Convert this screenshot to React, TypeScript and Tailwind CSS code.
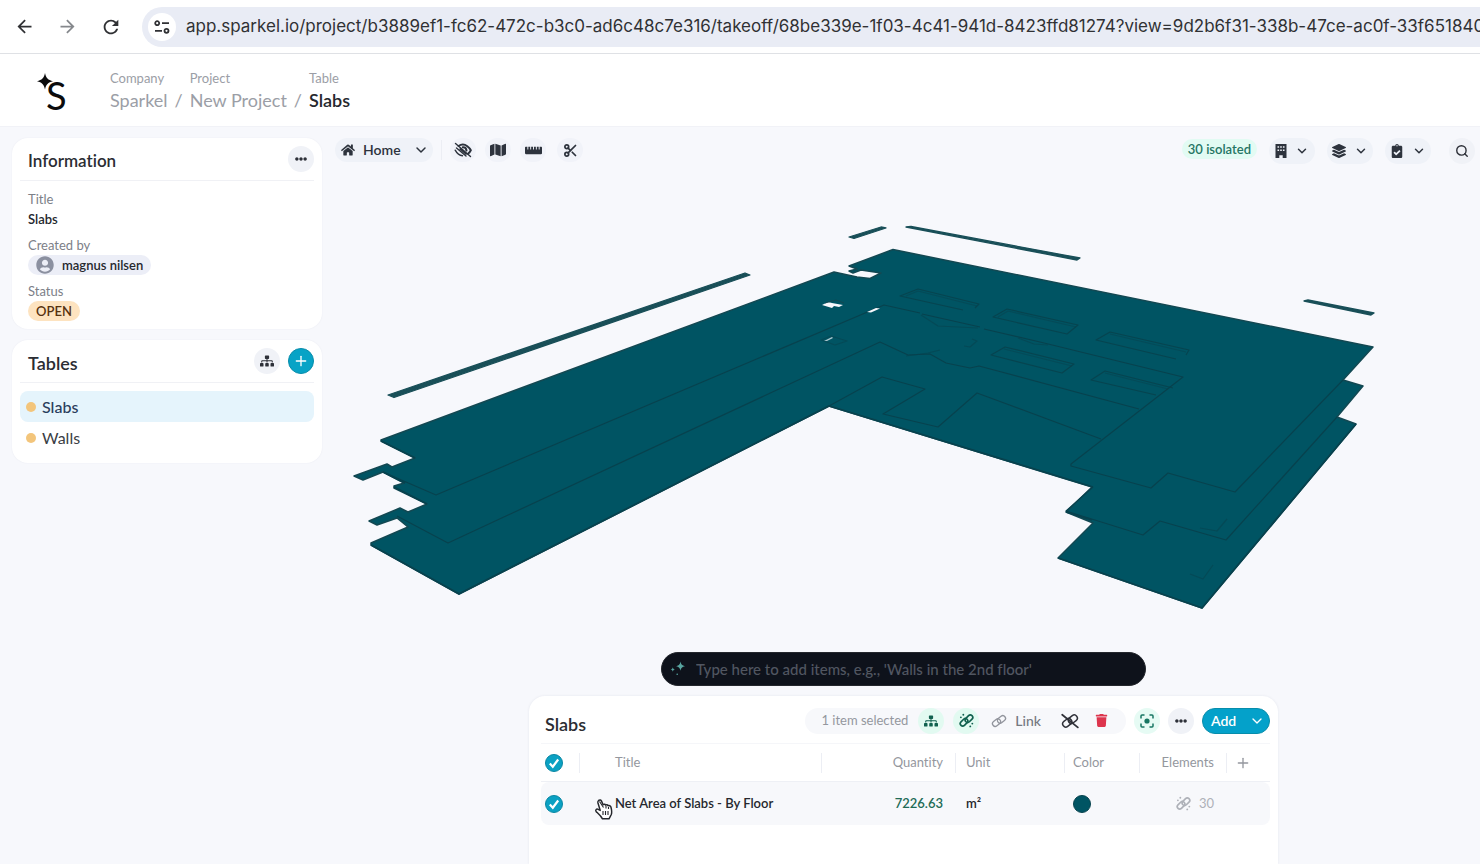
import React from "react";
import {
  FaHome,
  FaMap,
  FaRulerHorizontal,
  FaLayerGroup,
  FaClipboardCheck,
  FaSitemap,
  FaEllipsisH,
  FaUserCircle,
  FaTrash,
} from "react-icons/fa";
import { MdArrowBack, MdArrowForward, MdRefresh } from "react-icons/md";
import { ChevronDown, Plus, Scissors, Search } from "lucide-react";

function Divider() {
  return <span className="h-5 w-px bg-[#eceef4]" />;
}

function Sparkle({ className }: { className: string }) {
  return (
    <svg viewBox="0 0 16 16" className={className} fill="currentColor" aria-hidden="true">
      <path d="M10.500 0.500c.6 3 1.500 4 4.500 4.700-3 .7-3.900 1.600-4.500 4.600-.6-3-1.500-3.900-4.500-4.600 3-.7 3.900-1.700 4.500-4.700z" />
      <path d="M2.800 6.200c.3 1.500.8 2 2.200 2.300-1.400.3-1.900.8-2.200 2.300-.3-1.500-.8-2-2.200-2.300 1.400-.3 1.900-.8 2.200-2.300z" />
      <circle cx="7.200" cy="13.200" r="0.800" />
    </svg>
  );
}

function ChainLink({ className, slashed = false }: { className: string; slashed?: boolean }) {
  return (
    <svg viewBox="0 0 18 16" className={className} fill="none" stroke="currentColor" strokeWidth="1.500" strokeLinecap="round" aria-hidden="true">
      <g transform="rotate(-38 9 8)">
        <rect x="0.800" y="4.600" width="9.800" height="6.200" rx="3.100" />
        <rect x="7.400" y="5.200" width="9.800" height="6.200" rx="3.100" />
      </g>
      {slashed && <path d="M1.200 1.800l15.600 12.600" strokeWidth="1.800" />}
    </svg>
  );
}

function BrokenLink({ className }: { className: string }) {
  return (
    <svg viewBox="0 0 16 16" className={className} fill="none" stroke="currentColor" strokeWidth="1.800" strokeLinecap="round" aria-hidden="true">
      <g transform="rotate(-45 8 8)">
        <rect x="0.200" y="4.900" width="9.200" height="5.200" rx="2.600" />
        <rect x="6.600" y="5.900" width="9.200" height="5.200" rx="2.600" />
      </g>
      <g fill="currentColor" stroke="none">
        <circle cx="4.600" cy="1.800" r="1" />
        <circle cx="2" cy="4.600" r="1" />
        <circle cx="14.200" cy="11.300" r="1" />
        <circle cx="12" cy="14.300" r="1" />
      </g>
    </svg>
  );
}

function HiddenEye() {
  return (
    <svg viewBox="0 0 18 16" className="h-4 w-[18px]" fill="none" stroke="currentColor" strokeLinecap="round" aria-hidden="true">
      <path d="M4.500 4Q9 1 13.300 4.200 15.700 6 16.800 8.200 15.800 10.300 14 11.700" strokeWidth="2" />
      <path d="M8.800 5.200Q12.200 5 12.500 8.600" strokeWidth="2" />
      <path d="M1.500 1.500l15 13M2.500 6l9.500 8M1.200 8.200Q4 13.400 8.500 13.800M6 7l6 5" strokeWidth="1.400" />
    </svg>
  );
}

function Building() {
  return (
    <svg viewBox="0 0 12 14" className="h-3.5 w-3" aria-hidden="true">
      <path
        fill="currentColor"
        fillRule="evenodd"
        d="M0.500 0h11v14h-3.800v-2.800h-3.400V14H0.500zM2.500 2.200v1.500h1.600V2.200zM5.200 2.200v1.500h1.600V2.200zM7.900 2.200v1.500h1.600V2.200zM2.500 5.500V7h1.600V5.500zM5.200 5.500V7h1.600V5.500zM7.900 5.500V7h1.600V5.500z"
      />
    </svg>
  );
}

function FocusIcon() {
  return (
    <svg viewBox="0 0 14 14" className="size-3.5" fill="none" stroke="currentColor" strokeWidth="1.500" aria-hidden="true">
      <path d="M1 4.500V2q0-1 1-1h2.500M9.500 1H12q1 0 1 1v2.500M13 9.500V12q0 1-1 1H9.500M4.500 13H2q-1 0-1-1V9.500" />
      <circle cx="7" cy="7" r="2.600" fill="currentColor" stroke="none" />
    </svg>
  );
}

function HandCursor() {
  return (
    <svg viewBox="0 0 20 22" className="pointer-events-none absolute top-4 left-3.5 z-10 h-[22px] w-5" aria-hidden="true">
      <path
        d="M4.800 2.500c1-.9 2.200-.5 2.700.6l1.600 3.700c.8-.8 2-.6 2.500.3.900-.6 2-.3 2.400.6 1.100-.5 2.500.1 2.900 1.300.7 2.600 1.300 5.300.4 7.500l-2.300 4.300H8.500c-1.500-2.900-4-5-6.300-7.200-1.200-1.300.2-3.200 2-2.300l2 1.100-2.300-7.700c-.2-.9.200-1.800.9-2.400z"
        fill="#fff"
        stroke="#25272c"
        strokeWidth="1.500"
        strokeLinejoin="round"
      />
      <path d="M5.500 3.500l4 6M12 8v2.500M14.500 9v2M9 13v4M11.500 13v4M14 13v4" stroke="#25272c" strokeWidth="1.100" />
    </svg>
  );
}

function Check({ label }: { label: string }) {
  return (
    <label className="relative block size-[18px]">
      <input
        type="checkbox"
        defaultChecked
        aria-label={label}
        className="block size-[18px] appearance-none rounded-full border border-[#0a87a3] bg-[#0ba1c3]"
      />
      <svg viewBox="0 0 18 18" className="pointer-events-none absolute inset-0" fill="none" aria-hidden="true">
        <path d="M4.800 9.500l3 3.200L13.200 5.500" stroke="#fff" strokeWidth="2.200" />
      </svg>
    </label>
  );
}

function RoundButton({ label, children }: { label: string; children: React.ReactNode }) {
  return (
    <button aria-label={label} className="flex size-[26px] items-center justify-center rounded-full bg-[#f0f2f7] text-[#2d3038]">
      {children}
    </button>
  );
}

function ToolButton({ label, children }: { label: string; children: React.ReactNode }) {
  return (
    <button aria-label={label} className="flex h-6 w-[26px] items-center justify-center rounded-full bg-[#f1f3f9] text-[#2d333d]">
      {children}
    </button>
  );
}

function MenuButton({ label, children }: { label: string; children: React.ReactNode }) {
  return (
    <button aria-label={label} className="flex h-[26px] w-[46px] items-center justify-center gap-2 rounded-full bg-[#eff2f8] text-[#2d333d]">
      {children}
      <ChevronDown className="size-3.5" strokeWidth={2.500} />
    </button>
  );
}

function BrowserBar() {
  return (
    <div className="flex h-[54px] items-center gap-4 overflow-hidden border-b border-[#dfe1e5] bg-white pl-3.5 text-[#303134]">
      <div className="flex items-center gap-[22px]">
        <button aria-label="Back"><MdArrowBack className="size-[21px]" /></button>
        <button aria-label="Forward" className="text-[#85888c]"><MdArrowForward className="size-[21px]" /></button>
        <button aria-label="Reload"><MdRefresh className="size-[22px]" /></button>
      </div>
      <div className="ml-1 flex h-10 min-w-0 flex-1 items-center gap-2.5 rounded-l-full bg-[#e9ecf5] pl-1.5">
        <button aria-label="Site information" className="flex size-7 shrink-0 items-center justify-center rounded-full bg-white">
          <svg viewBox="0 0 16 14" className="h-3.5 w-4" fill="none" stroke="currentColor" strokeWidth="1.800" aria-hidden="true">
            <circle cx="3.200" cy="3.200" r="2" />
            <path d="M8 3.200h7M1 10.800h7" />
            <circle cx="12.500" cy="10.800" r="2" />
          </svg>
        </button>
        <input
          aria-label="Address"
          readOnly
          value="app.sparkel.io/project/b3889ef1-fc62-472c-b3c0-ad6c48c7e316/takeoff/68be339e-1f03-4c41-941d-8423ffd81274?view=9d2b6f31-338b-47ce-ac0f-33f651840"
          className="min-w-0 flex-1 bg-transparent font-[Inter,sans-serif] text-[17px] outline-none"
        />
      </div>
    </div>
  );
}

function AppHeader() {
  return (
    <header className="flex h-[73px] items-center gap-9 border-b border-[#f1f2f7] bg-white pl-9">
      <svg viewBox="0 0 38 60" className="h-[60px] w-[38px]" role="img" aria-label="Sparkel">
        <text x="10" y="50" fontSize="38" fontFamily="Lato, sans-serif" fill="#0b0b0c">S</text>
        <path d="M9 13c1 5 3 7 8 8.200-5 1.200-7 3.300-8 8.300-1-5-3-7.100-8-8.300 5-1.200 7-3.200 8-8.200z" fill="#0b0b0c" />
      </svg>
      <nav aria-label="Breadcrumb" className="flex items-end gap-[7px] text-lg leading-6 text-[#9b9ea6]">
        <a href="#company"><span className="block text-[13px] leading-5">Company</span>Sparkel</a>
        <span>/</span>
        <a href="#project"><span className="block text-[13px] leading-5">Project</span>New Project</a>
        <span>/</span>
        <a href="#table" className="font-semibold text-[#26282e]">
          <span className="block text-[13px] leading-5 font-normal text-[#9b9ea6]">Table</span>Slabs
        </a>
      </nav>
    </header>
  );
}

function Sidebar() {
  return (
    <aside className="flex w-[310px] shrink-0 flex-col gap-[11px] pt-[11px]">
      <section className="h-[191px] rounded-2xl bg-white px-2 pt-2 shadow-[0_0_2px_rgba(30,40,80,0.060)]">
        <div className="flex h-[35px] items-start justify-between border-b border-[#f0f1f5] pl-2">
          <h2 className="text-[17px] leading-[30px] font-semibold text-[#2b2d33]">Information</h2>
          <RoundButton label="More options"><FaEllipsisH className="size-3" /></RoundButton>
        </div>
        <dl className="px-2 pt-2 text-[13px] leading-5">
          <dt className="text-[#7c8088]">Title</dt>
          <dd className="mb-1.5 font-semibold text-[#26282e]">Slabs</dd>
          <dt className="text-[#7c8088]">Created by</dt>
          <dd className="mb-1.5 flex h-5 w-fit items-center gap-2 rounded-full bg-[#eceef7] px-2 font-semibold text-[#26282e]">
            <FaUserCircle className="size-[18px] text-[#8b90a0]" />magnus nilsen
          </dd>
          <dt className="text-[#7c8088]">Status</dt>
          <dd className="w-fit rounded-full bg-[#fde3c0] px-2 font-semibold text-[#55310f]">OPEN</dd>
        </dl>
      </section>
      <section className="rounded-2xl bg-white px-2 pt-2 pb-2.5 shadow-[0_0_2px_rgba(30,40,80,0.060)]">
        <div className="flex h-[35px] items-start gap-2 border-b border-[#f0f1f5] pl-2">
          <h2 className="flex-1 text-lg leading-[30px] font-semibold text-[#2b2d33]">Tables</h2>
          <RoundButton label="Table hierarchy"><FaSitemap className="size-3.5" /></RoundButton>
          <button aria-label="Add table" className="flex size-[26px] items-center justify-center rounded-full border border-[#078dab] bg-[#07a3c6] text-white">
            <Plus className="size-4" strokeWidth={2} />
          </button>
        </div>
        <ul className="pt-2 text-base text-[#3a3d44]">
          <li>
            <a href="#slabs" className="flex h-[31px] items-center gap-1.5 rounded-lg bg-[#e5f4fc] px-1.5 font-medium text-[#2a3d5c]">
              <span className="size-2.5 rounded-full bg-[#f3c57b]" />Slabs
            </a>
          </li>
          <li>
            <a href="#walls" className="flex h-[31px] items-center gap-1.5 rounded-lg px-1.5">
              <span className="size-2.5 rounded-full bg-[#f3c57b]" />Walls
            </a>
          </li>
        </ul>
      </section>
    </aside>
  );
}

function Toolbar() {
  return (
    <div className="flex h-[26px] items-start pr-[5px] pl-2">
      <button className="flex h-6 w-[98px] items-center rounded-full bg-[#eff2f8] pl-1.5 text-sm leading-5 font-semibold text-[#2d333d]">
        <FaHome className="mr-2 size-3.5" />Home
        <ChevronDown className="mr-1 ml-auto size-4" strokeWidth={2.200} />
      </button>
      <span className="mx-2 flex h-6 items-center"><Divider /></span>
      <div className="flex items-center gap-[9px]">
        <ToolButton label="Hide elements"><HiddenEye /></ToolButton>
        <ToolButton label="Map"><FaMap className="size-4" /></ToolButton>
        <ToolButton label="Measure"><FaRulerHorizontal className="size-[17px]" /></ToolButton>
        <span className="ml-0.5"><ToolButton label="Cut"><Scissors className="size-[15px]" strokeWidth={2.800} /></ToolButton></span>
      </div>
      <div className="ml-auto flex items-center gap-3">
        <span className="-mt-1 rounded-full bg-[#e2fbf3] px-1.5 text-[13px] leading-5 font-semibold text-[#257564]">30 isolated</span>
        <MenuButton label="Floors"><Building /></MenuButton>
        <MenuButton label="Layers"><FaLayerGroup className="size-3.5" /></MenuButton>
        <MenuButton label="Tasks"><FaClipboardCheck className="size-3.5" /></MenuButton>
        <span className="-ml-0.5 -mr-1"><Divider /></span>
        <RoundButton label="Search"><Search className="size-3.5" strokeWidth={2.400} /></RoundButton>
      </div>
    </div>
  );
}

function SlabModel() {
  return (
    <svg viewBox="327 164 1153 488" className="block h-auto w-full" role="img" aria-label="Building slabs model">
      <g fill="#194f58" stroke="#194f58" strokeWidth="1.300" strokeLinejoin="round">
        <path d="M388 395l6 2.500L750 275l-5-2z" />
        <path d="M849 237l5 1.500 32-10.500-5-1z" />
        <path d="M906 227l5-0.500L1080 258l-3 2z" />
        <path d="M1304 301l4-1 66 13-3 2z" />
      </g>
      <path
        fill="#005463"
        stroke="#134852"
        strokeWidth="1.500"
        strokeLinejoin="round"
        d="M381 440L834 272 857 277 870 278.500 881 273 861 270 853 273 849 271 857 269 849 266 893 249.500 1373 347 1343 380 1363 386 1337 417 1356 424 1202 608 1058 558 1093 523 1066 512 1092 487 829 406 459 594 371 545 371 543 408 527 397 518 377 525 369 521 400 508 408 512 427 504 394 488 394 486 404 483 383 472 363 480 354 476 387 464 392 467 415 458 381 441z"
      />
      <g fill="none" stroke="#07424e" strokeWidth="1.200" strokeLinejoin="round">
        <path d="M383 472L436 495 884 305 920 313M922 314l58 13M984 329L1040 342 1183 377 1071 464v2l80 22 17-15 67 19 108-112" />
        <path d="M397 516L448 543 880 342l28 13 22-1 16 9 24 5 9-2 160 43M1093 487l-27 24 77 24 17-14 66 19L1337 417" />
        <path d="M829 406L882 377l43 12-42 25 55 13 39-34 124 46" />
        <g strokeOpacity="0.900">
          <path d="M963 310L900 296l18-7 61 15-4 4M993 317l14-8 71 16-11 9zM1176 359l-80-19 14-8 79 18-3 5M991 355l14-8 69 17-12 9zM1156 395l-65-15 14-9 68 17" />
          <path d="M906 296l12-5 59 15M998 317l10-6 68 16M1110 334l76 18M1004 349l68 17M1105 373l63 16" strokeOpacity="0.500" />
          <path d="M921 315l17 11 40 2M906 356l22-3 12-3M1018 338l16 6 14 1M972 339l5 2-7 6-6-1M821 340l10-4 16 5-12 4zM1200 528l17 3 10-12M1190 574l13 5 10-14" strokeOpacity="0.600" />
        </g>
        <path d="M371 545l88 49L829 406l264 81M1066 512l26 8M1058 558l144 50 154-184M394 487l33 17M381 441l34 17M383 472l22 11" strokeWidth="1.800" />
      </g>
      <g fill="#f7f8fc">
        <path d="M822 305l6-3 4 1 11 2-4 2-5-1-2 2z" />
        <path d="M825 303l11-3 8 3" fill="none" stroke="#134852" />
        <path d="M867 312l9-4 4 .5-9 4z" />
        <path d="M824 341l8-4 1 1-6 3z" fillOpacity="0.700" />
      </g>
    </svg>
  );
}

function Prompt() {
  return (
    <label className="flex h-[34px] w-[485px] max-w-full items-center gap-2.5 rounded-full border border-[#24272d] bg-[#0e121b] pl-2">
      <Sparkle className="size-4 text-[#58a5a0]" />
      <input
        aria-label="Add items"
        placeholder="Type here to add items, e.g., 'Walls in the 2nd floor'"
        className="min-w-0 flex-1 bg-transparent pr-4 text-[15px] text-white outline-none placeholder:font-medium placeholder:text-[#515661]"
      />
    </label>
  );
}

function TablePanel() {
  const head = "h-[38px] border-b border-[#eef0f5] p-0 font-normal text-[#94979e]";
  return (
    <section className="mt-2.5 w-[749px] max-w-full flex-1 rounded-t-2xl bg-white pr-2 pl-3 shadow-[0_0_3px_rgba(30,40,80,0.080)]">
      <div className="flex h-12 items-center border-b border-[#f5f6f9] pt-0.5">
        <h2 className="flex-1 pt-1.5 pl-1 text-lg font-semibold text-[#2b2d33]">Slabs</h2>
        <div className="flex h-[26px] items-center rounded-full bg-[#f7f8fb] pr-[18px] pl-4 text-[13px] text-[#94979e]">
          <span>1 item selected</span>
          <div className="ml-2.5 flex items-center gap-[9px]">
            <button aria-label="Group items" className="flex size-[26px] items-center justify-center rounded-full bg-[#e2faf1] text-[#11614f]"><FaSitemap className="size-3.5" /></button>
            <button aria-label="Sync links" className="flex size-[26px] items-center justify-center rounded-full bg-[#e2faf1] text-[#11614f]"><BrokenLink className="size-[15px]" /></button>
          </div>
          <button className="ml-3 flex items-center gap-2 text-sm font-medium text-[#757981]"><ChainLink className="size-4 text-[#92959d]" />Link</button>
          <button aria-label="Unlink" className="ml-5 text-[#303239]"><ChainLink slashed className="h-4 w-[18px]" /></button>
          <button aria-label="Delete" className="ml-4 text-[#dd354d]"><FaTrash className="size-[13px]" /></button>
        </div>
        <div className="ml-2 flex items-center gap-2">
          <button aria-label="Focus selection" className="flex size-[26px] items-center justify-center rounded-full bg-[#e6fbf4] text-[#177662]"><FocusIcon /></button>
          <RoundButton label="More actions"><FaEllipsisH className="size-3" /></RoundButton>
          <button className="flex h-[26px] w-[68px] items-center justify-between rounded-full border border-[#078dab] bg-[#04a1ca] px-2 text-sm font-semibold text-white">
            Add<ChevronDown className="-mr-1 size-4" strokeWidth={2} />
          </button>
        </div>
      </div>
      <table className="w-full table-fixed border-separate border-spacing-0 text-[13px]">
        <colgroup>
          <col className="w-[39px]" />
          <col />
          <col className="w-[134px]" />
          <col className="w-[109px]" />
          <col className="w-[75px]" />
          <col className="w-[87px]" />
          <col className="w-[43px]" />
        </colgroup>
        <thead>
          <tr>
            <th className={head}><div className="flex items-center justify-between pl-1"><Check label="Select all rows" /><Divider /></div></th>
            <th className={head}><div className="flex items-center justify-between pl-[35px]">Title<Divider /></div></th>
            <th className={head}><div className="flex items-center justify-end gap-3">Quantity<Divider /></div></th>
            <th className={head}><div className="flex items-center justify-between pl-2.5">Unit<Divider /></div></th>
            <th className={head}><div className="flex items-center justify-between pl-2">Color<Divider /></div></th>
            <th className={head}><div className="flex items-center justify-end gap-3">Elements<Divider /></div></th>
            <th className={head}><button aria-label="Add column" className="flex pl-2"><Plus className="size-4" strokeWidth={2} /></button></th>
          </tr>
        </thead>
        <tbody>
          <tr className="[&>td]:h-[43px] [&>td]:bg-[#f7f8fb] [&>td]:p-0">
            <td className="rounded-l-lg"><div className="pl-1"><Check label="Select Net Area of Slabs - By Floor" /></div></td>
            <td className="relative pl-[35px]! font-semibold text-[#26282e]"><HandCursor />Net Area of Slabs - By Floor</td>
            <td className="pr-[13px]! text-right font-semibold text-[#226b56]">7226.63</td>
            <td className="pl-2.5! font-semibold text-[#26282e]">m²</td>
            <td className="pl-2!"><span className="block size-[18px] rounded-full border border-[#08444e] bg-[#005463]" /></td>
            <td className="pr-[13px]!"><div className="flex items-center justify-end gap-2 text-[#aeb1b8]"><BrokenLink className="size-[15px]" />30</div></td>
            <td className="rounded-r-lg" />
          </tr>
        </tbody>
      </table>
    </section>
  );
}

export default function App() {
  return (
    <div className="flex min-h-screen flex-col bg-[#f7f8fc] font-[Lato,'Open_Sans',sans-serif] [font-variant-ligatures:none]">
      <BrowserBar />
      <AppHeader />
      <div className="flex flex-1 pl-3">
        <Sidebar />
        <main className="ml-[5px] flex min-w-0 flex-1 flex-col items-center pt-[11px]">
          <div className="w-full"><Toolbar /></div>
          <SlabModel />
          <Prompt />
          <TablePanel />
        </main>
      </div>
    </div>
  );
}
